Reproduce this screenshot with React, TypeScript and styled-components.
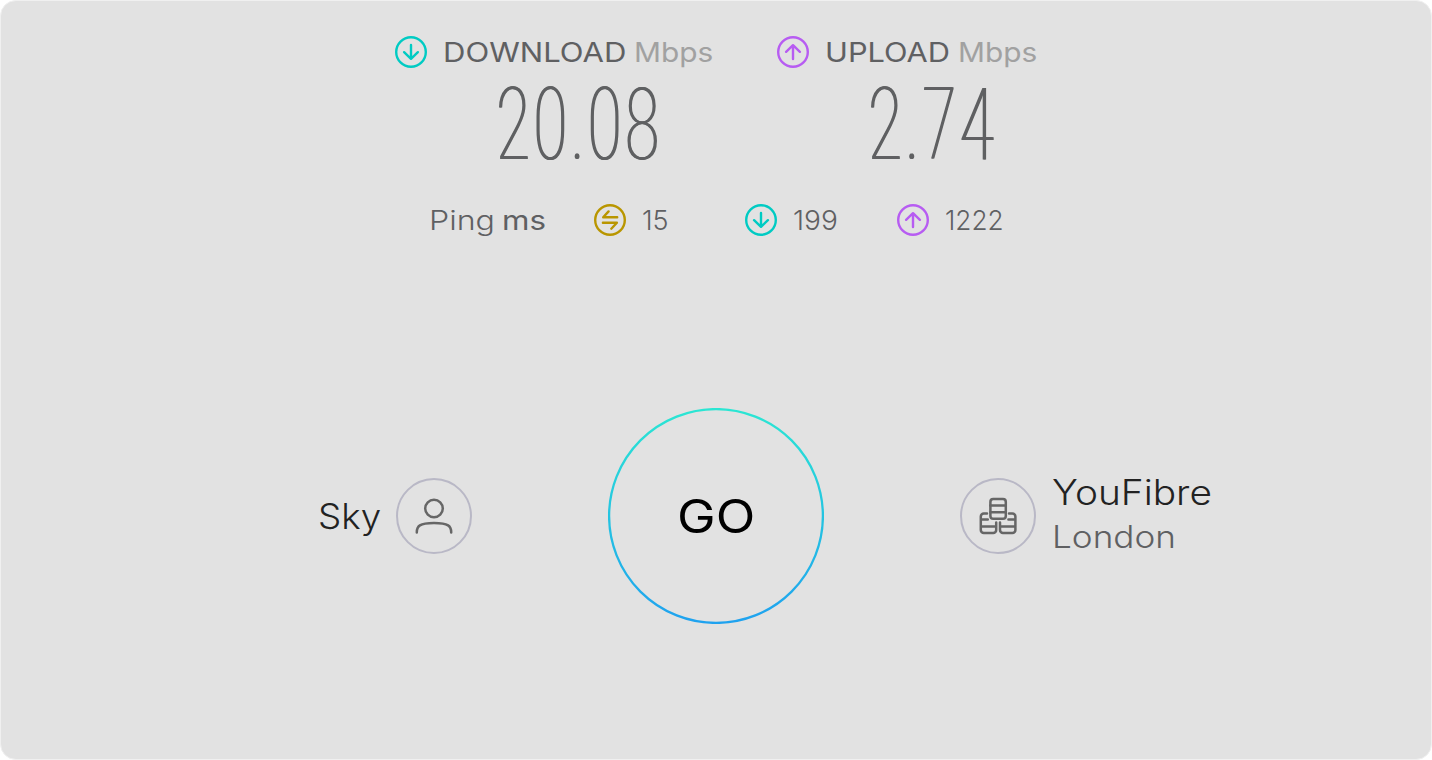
import React from 'react';
import styled, { createGlobalStyle } from 'styled-components';

type Tone = 'down' | 'up' | 'ping';

const toneColor: Record<Tone, string> = {
  down: '#00cbc3',
  up: '#b75cf2',
  ping: '#b99600',
};

const pings: { tone: Tone; value: string; width: number; stretch: number }[] = [
  { tone: 'ping', value: '15', width: 103, stretch: 1 },
  { tone: 'down', value: '199', width: 104, stretch: 1.04 },
  { tone: 'up', value: '1222', width: 60, stretch: 0.97 },
];

const ToneIcon = ({ tone }: { tone: Tone }) => (
  <IconSvg viewBox="0 0 32 32" stroke={toneColor[tone]}>
    <circle cx="16" cy="16" r="14.8" />
    {tone === 'down' && <path d="M16 9v13.6M9.1 16.2l6.9 6.6 6.9-6.6" />}
    {tone === 'up' && <path d="M16 23V9.4M9.1 15.8L16 9.2l6.9 6.6" />}
    {tone === 'ping' && <path d="M14.6 7.4L9.2 13.3h14M8.9 18.7h14l-5.6 6" />}
  </IconSvg>
);

const UserIcon = () => (
  <PartySvg viewBox="0 0 48 48">
    <circle cx="24" cy="16.5" r="8.8" />
    <path d="M6.8 40.4c0-6.2 2.6-9.3 17.2-9.3s17.2 3.1 17.2 9.3" />
  </PartySvg>
);

const ServerIcon = () => (
  <PartySvg viewBox="0 0 48 48">
    <rect x="16.4" y="7.1" width="15.4" height="19.6" rx="2.8" />
    <path d="M16.4 13.6h15.4M16.4 20.2h15.4" />
    <path d="M13 21.4H9.8a3 3 0 0 0-3 3V38a3 3 0 0 0 3 3h9.4a3 3 0 0 0 3-3v-7.6M6.8 27.6h7M6.8 34.4h15.4" />
    <path d="M35 21.4h3.4a3 3 0 0 1 3 3V38a3 3 0 0 1-3 3H29a3 3 0 0 1-3-3v-7.6M41.4 27.6h-7M41.4 34.4H26" />
  </PartySvg>
);

const App = () => {
  return (
    <>
      <GlobalStyle />
      <Panel>
        <Results>
          <Result>
            <ToneIcon tone="down" />
            <ResultTitle>
              <Word $width={191} $stretch={1.15}>DOWNLOAD</Word>
              <Word $width={78} $stretch={1.105} $color="#a1a1a1">Mbps</Word>
            </ResultTitle>
            <Speed><Digits>20.08</Digits></Speed>
          </Result>
          <Result>
            <ToneIcon tone="up" />
            <ResultTitle>
              <Word $width={133} $stretch={1.14}>UPLOAD</Word>
              <Word $width={78} $stretch={1.105} $color="#a1a1a1">Mbps</Word>
            </ResultTitle>
            <Speed><Digits>2.74</Digits></Speed>
          </Result>
        </Results>

        <PingRow>
          <Word $width={73} $stretch={1.19} $weight={300}>Ping</Word>
          <Word $width={92} $stretch={1.16} $weight={420}>ms</Word>
          {pings.map((ping) => (
            <PingItem key={ping.tone}>
              <ToneIcon tone={ping.tone} />
              <Word $width={ping.width} $stretch={ping.stretch} $weight={300}>{ping.value}</Word>
            </PingItem>
          ))}
        </PingRow>

        <StartRow>
          <Party $end>
            <Word $width={62.5} $stretch={1.06} $size={34.7} $weight={350} $color="#222">Sky</Word>
            <Badge><UserIcon /></Badge>
          </Party>
          <GoButton>
            <Ring viewBox="0 0 216 216">
              <defs>
                <linearGradient id="ring" x1="0" y1="0" x2="0" y2="1">
                  <stop offset="0" stopColor="#2be6d3" />
                  <stop offset="1" stopColor="#1fa2ef" />
                </linearGradient>
              </defs>
              <circle cx="108" cy="108" r="106.9" fill="none" stroke="url(#ring)" strokeWidth="2.3" />
            </Ring>
            <Word $width={78} $stretch={1.126} $size={46} $weight={430} $color="#000">GO</Word>
          </GoButton>
          <Party>
            <Badge><ServerIcon /></Badge>
            <ServerName>
              <Word $width={162} $stretch={1.12} $size={34.7} $weight={350} $color="#222">YouFibre</Word>
              <Word $width={122} $stretch={1.14} $size={30.8} $weight={300}>London</Word>
            </ServerName>
          </Party>
        </StartRow>
      </Panel>
    </>
  );
};

export default App;

const GlobalStyle = createGlobalStyle`
  body {
    margin: 0;
    background: #fff;
    font-family: Inter, sans-serif;
  }
`;

const Panel = styled.main`
  box-sizing: border-box;
  width: 1432px;
  height: 760px;
  padding-top: 34px;
  border: 1px solid #f0f0f0;
  border-radius: 16px;
  background: #e2e2e2;
`;

const Results = styled.section`
  display: grid;
  grid-template-columns: 318px 260px;
  column-gap: 64px;
  padding-left: 394px;
`;

const Result = styled.div`
  display: grid;
  grid-template-columns: 32px 1fr;
  column-gap: 16px;
  align-items: center;
`;

const ResultTitle = styled.div`
  display: flex;
  box-sizing: border-box;
  height: 34px;
  padding-top: 2px;
  align-items: center;
`;

const Word = styled.div<{ $width: number; $stretch: number; $size?: number; $weight?: number; $color?: string }>`
  width: ${(p) => p.$width / p.$stretch}px;
  margin-right: ${(p) => p.$width - p.$width / p.$stretch}px;
  font-size: ${(p) => p.$size || 27}px;
  font-weight: ${(p) => p.$weight || 400};
  line-height: 44px;
  color: ${(p) => p.$color || '#5f6062'};
  white-space: nowrap;
  transform: scaleX(${(p) => p.$stretch});
  transform-origin: left;
`;

const Speed = styled.div`
  grid-column: 2;
  display: flex;
  justify-content: center;
  box-sizing: border-box;
  height: 108px;
  padding-top: 16px;
  padding-right: 3px;
`;

const Digits = styled.span`
  font-family: Roboto, sans-serif;
  font-size: 101px;
  font-weight: 100;
  line-height: 80px;
  letter-spacing: 6px;
  margin-right: -6px;
  color: #5f6062;
  text-shadow: 1.3px 0 currentColor, -1.3px 0 currentColor;
  transform: scaleX(0.61);
`;

const PingRow = styled.section`
  display: flex;
  align-items: center;
  height: 44px;
  margin-top: 21px;
  padding-left: 428px;

  ${Word} {
    padding-top: 1px;
  }
`;

const PingItem = styled.div`
  display: flex;
  align-items: center;
  gap: 16px;
`;

const StartRow = styled.section`
  display: grid;
  grid-template-columns: 471px 216px 1fr;
  column-gap: 136px;
  align-items: center;
  height: 216px;
  margin-top: 166px;
`;

const Party = styled.div<{ $end?: boolean }>`
  display: flex;
  align-items: center;
  justify-content: ${(p) => (p.$end ? 'flex-end' : 'flex-start')};
  gap: 16px;
`;

const ServerName = styled.div`
  padding-bottom: 4px;

  ${Word} + ${Word} {
    padding-top: 1px;
  }
`;

const Badge = styled.div`
  display: flex;
  align-items: center;
  justify-content: center;
  box-sizing: border-box;
  width: 76px;
  height: 76px;
  border: 2px solid #b9b8c6;
  border-radius: 50%;
`;

const GoButton = styled.button`
  display: grid;
  place-items: center;
  width: 216px;
  height: 216px;
  padding: 0;
  border: 0;
  background: none;
  font-family: inherit;

  > * {
    grid-area: 1 / 1;
  }
`;

const Ring = styled.svg`
  width: 216px;
  height: 216px;
`;

const IconSvg = styled.svg`
  flex: none;
  width: 32px;
  height: 32px;
  fill: none;
  stroke-width: 2.4;
  stroke-linecap: round;
  stroke-linejoin: round;
`;

const PartySvg = styled.svg`
  width: 48px;
  height: 48px;
  fill: none;
  stroke: #666;
  stroke-width: 2.5;
  stroke-linecap: round;
  stroke-linejoin: round;
`;
